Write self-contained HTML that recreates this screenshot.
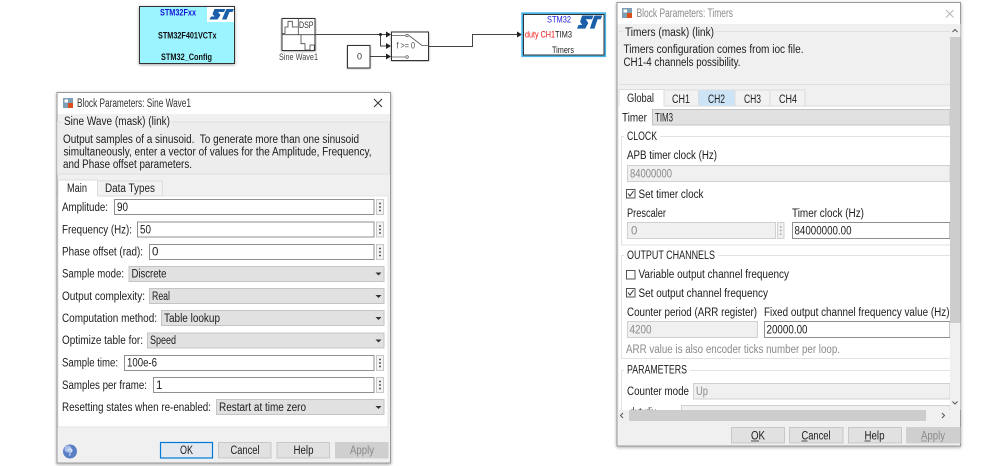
<!DOCTYPE html>
<html><head><meta charset="utf-8"><title>Block Parameters</title>
<style>
html,body{margin:0;padding:0;background:#fff;width:999px;height:466px;overflow:hidden}
svg{display:block;position:absolute;left:0;top:0;filter:blur(.35px)}
text{font-family:"Liberation Sans",sans-serif;font-size:11.5px;fill:#1c1c1c;white-space:pre}
.g{fill:#8a8a8a}.s{font-size:9px}.b{font-weight:bold}.t{fill:#555}
.f{fill:#fff;stroke:#8f8f8f}.d{fill:#f0f0f0;stroke:#d0d0d0}.c{fill:#e1e1e1;stroke:#c4c4c4}
.btn{fill:#e1e1e1;stroke:#c8c8c8}.dots{fill:#f3f3f3;stroke:#c8c8c8}
.w{fill:none;stroke:#444;stroke-width:1}
</style></head><body>
<svg width="999" height="466" viewBox="0 0 999 466" xmlns="http://www.w3.org/2000/svg">
<defs>
<filter id="sh" x="-5%" y="-5%" width="110%" height="110%"><feDropShadow dx="0" dy="1" stdDeviation="1.5" flood-color="#000" flood-opacity=".35"/></filter>
<clipPath id="cl"><rect x="619" y="400" width="331" height="10"/></clipPath>
<g id="st" fill="#1a5fa8"><path d="M5 0 H16 L14.5 3 H8.5 L11 6 L8 10.5 H0 L1.5 7.5 H5 L3 5 Z"/><path d="M17 0 H24.5 L23 3 H20 L17 10.5 H12.5 L15.5 3 Z"/></g>
<g id="dots"><circle cx="0" cy="-3.5" r=".9" fill="#333"/><circle cx="0" cy="0" r=".9" fill="#333"/><circle cx="0" cy="3.5" r=".9" fill="#333"/></g>
<path id="arr" d="M0 0 L-5 -3 V3 Z" fill="#222"/>
<path id="dd" d="M-3 0 H3 L0 3 Z" fill="#333"/>
</defs>

<!-- STM32 config block -->
<rect x="139.5" y="6.5" width="95" height="57" fill="#9bf4ff" stroke="#333" filter="url(#sh)"/>
<rect x="207" y="7" width="27" height="15" fill="#fff"/>
<use href="#st" x="209.5" y="9"/>
<text x="160" y="15.5" class="s b" style="fill:#1515d8" textLength="36" lengthAdjust="spacingAndGlyphs">STM32Fxx</text>
<text x="158" y="38.5" class="s b" style="fill:#111" textLength="58.5" lengthAdjust="spacingAndGlyphs">STM32F401VCTx</text>
<text x="161" y="60" class="s b" style="fill:#111" textLength="51" lengthAdjust="spacingAndGlyphs">STM32_Config</text>

<!-- Sine block -->
<rect x="282" y="18.5" width="33" height="32" fill="#fff" stroke="#333" filter="url(#sh)"/>
<path d="M282 34.7 H315 M298.3 18.5 V34.7 M298.3 34.7 H301 M282.5 33.5 H285 V27 H288 V21.3 H292.3 V27 H298.3" fill="none" stroke="#444" stroke-width=".8"/>
<path d="M301 34.7 V43.7 H305 V50 H310 V45 H314.3 V50" fill="none" stroke="#444" stroke-width=".8"/>
<text x="299" y="28" class="s" style="fill:#333" textLength="14.5" lengthAdjust="spacingAndGlyphs">DSP</text>
<text x="279" y="60" class="s" style="fill:#444" textLength="39" lengthAdjust="spacingAndGlyphs">Sine Wave1</text>

<!-- Signals -->
<path class="w" d="M315 34.5 H386 M380.5 34.5 V46 H386 M370 56.5 H386 M429 46.5 H472.5 V34.5 H517"/>
<circle cx="380.5" cy="34.5" r="1.5" fill="#222"/>
<use href="#arr" x="391" y="34.5"/><use href="#arr" x="391" y="46"/><use href="#arr" x="391" y="56.5"/><use href="#arr" x="522" y="34.5"/>

<!-- Switch -->
<rect x="391.5" y="32" width="37" height="28.5" fill="#fff" stroke="#333" filter="url(#sh)"/>
<path d="M392 35.5 H405 M392 57 H405 M409 35.5 L422 45.5 H428" fill="none" stroke="#555" stroke-width=".8"/>
<circle cx="407" cy="35.5" r="1.3" fill="#fff" stroke="#444" stroke-width=".7"/>
<circle cx="407" cy="57" r="1.3" fill="#fff" stroke="#444" stroke-width=".7"/>
<text x="396.5" y="48.5" style="fill:#444;font-size:9.5px" textLength="18.5" lengthAdjust="spacingAndGlyphs">f &gt;= 0</text>

<!-- Constant -->
<rect x="347.5" y="45.5" width="22.5" height="22.5" fill="#fff" stroke="#333" filter="url(#sh)"/>
<text x="357" y="59.5" style="fill:#333;font-size:9px">0</text>

<!-- Timers block -->
<rect x="522.2" y="13.2" width="83" height="43" fill="#fff" stroke="#48b4e8" stroke-width="1.8"/>
<rect x="523.5" y="14.5" width="80.5" height="40.5" fill="#fff" stroke="#333"/>
<use href="#st" transform="translate(577 15.5) scale(1.03 1.25)"/>
<text x="547" y="22.5" class="s" style="fill:#2222dd" textLength="24" lengthAdjust="spacingAndGlyphs">STM32</text>
<text x="525" y="37.5" class="s" style="fill:#ee1111" textLength="30" lengthAdjust="spacingAndGlyphs">duty CH1</text>
<text x="555" y="37.5" class="s" style="fill:#222" textLength="17" lengthAdjust="spacingAndGlyphs">TIM3</text>
<text x="552" y="53" class="s" style="fill:#222" textLength="22" lengthAdjust="spacingAndGlyphs">Timers</text>

<!-- ======= Sine Wave dialog ======= -->
<rect x="57" y="92.5" width="333.5" height="370.5" fill="#f0f0f0" stroke="#9a9a9a" filter="url(#sh)"/>
<rect x="57.5" y="93" width="332.5" height="21" fill="#fff"/>
<rect x="63" y="98" width="10" height="10" fill="#7d9fb5"/><rect x="68" y="103" width="5" height="5" fill="#d9501e"/><rect x="64.5" y="99.5" width="3.5" height="3" fill="#fff"/>
<text x="77" y="107" class="t" textLength="114" lengthAdjust="spacingAndGlyphs" style="fill:#333">Block Parameters: Sine Wave1</text>
<path d="M374 99 L382 107 M382 99 L374 107" stroke="#333" fill="none"/>
<rect x="57.5" y="122" width="332" height="52" fill="#ededed" stroke="#e0e0e0"/>
<rect x="62" y="116" width="110" height="10" fill="#f0f0f0"/>
<text x="64" y="125" textLength="106" lengthAdjust="spacingAndGlyphs">Sine Wave (mask) (link)</text>
<text x="63" y="143" textLength="296" lengthAdjust="spacingAndGlyphs">Output samples of a sinusoid.  To generate more than one sinusoid</text>
<text x="63.5" y="155.5" textLength="308" lengthAdjust="spacingAndGlyphs">simultaneously, enter a vector of values for the Amplitude, Frequency,</text>
<text x="63" y="168" textLength="129" lengthAdjust="spacingAndGlyphs">and Phase offset parameters.</text>

<rect x="58" y="196" width="330" height="231" fill="#fff" stroke="#e4e4e4"/>
<rect x="97.5" y="181" width="65" height="15" fill="#f2f2f2" stroke="#dcdcdc"/>
<rect x="58" y="180" width="39.5" height="17" fill="#fff"/>
<path d="M58 196 V180 H97.5 V196" fill="none" stroke="#dcdcdc"/>
<text x="67" y="192" textLength="20" lengthAdjust="spacingAndGlyphs">Main</text>
<text x="105" y="192" textLength="50" lengthAdjust="spacingAndGlyphs">Data Types</text>

<text x="62" y="211" textLength="46" lengthAdjust="spacingAndGlyphs">Amplitude:</text>
<rect class="f" x="114.5" y="199.5" width="259.5" height="15"/><text x="117" y="211" textLength="11" lengthAdjust="spacingAndGlyphs">90</text>
<rect class="dots" x="376.5" y="199.5" width="7" height="15"/><use href="#dots" x="380" y="207"/>

<text x="62" y="233.5" textLength="70" lengthAdjust="spacingAndGlyphs">Frequency (Hz):</text>
<rect class="f" x="137.5" y="222" width="236.5" height="15"/><text x="140" y="233.5" textLength="11" lengthAdjust="spacingAndGlyphs">50</text>
<rect class="dots" x="376.5" y="222" width="7" height="15"/><use href="#dots" x="380" y="229.5"/>

<text x="62" y="255.5" textLength="81" lengthAdjust="spacingAndGlyphs">Phase offset (rad):</text>
<rect class="f" x="149.5" y="244.5" width="224.5" height="15"/><text x="152" y="255.5">0</text>
<rect class="dots" x="376.5" y="244.5" width="7" height="15"/><use href="#dots" x="380" y="252"/>

<text x="62" y="277.5" textLength="62" lengthAdjust="spacingAndGlyphs">Sample mode:</text>
<rect class="c" x="129" y="266.5" width="255" height="15"/><text x="131.5" y="277.5" textLength="35" lengthAdjust="spacingAndGlyphs">Discrete</text><use href="#dd" x="378.5" y="272.5"/>

<text x="62" y="300" textLength="83" lengthAdjust="spacingAndGlyphs">Output complexity:</text>
<rect class="c" x="149.5" y="288.5" width="234.5" height="15"/><text x="152" y="300" textLength="18" lengthAdjust="spacingAndGlyphs">Real</text><use href="#dd" x="378.5" y="295"/>

<text x="62" y="322" textLength="95" lengthAdjust="spacingAndGlyphs">Computation method:</text>
<rect class="c" x="161.5" y="310.5" width="222.5" height="15"/><text x="164" y="322" textLength="56" lengthAdjust="spacingAndGlyphs">Table lookup</text><use href="#dd" x="378.5" y="317"/>

<text x="62" y="344" textLength="81" lengthAdjust="spacingAndGlyphs">Optimize table for:</text>
<rect class="c" x="147.5" y="333" width="236.5" height="15"/><text x="150" y="344" textLength="26" lengthAdjust="spacingAndGlyphs">Speed</text><use href="#dd" x="378.5" y="339.5"/>

<text x="62" y="366.5" textLength="56" lengthAdjust="spacingAndGlyphs">Sample time:</text>
<rect class="f" x="124.5" y="355.5" width="249.5" height="15"/><text x="127" y="366.5" textLength="30" lengthAdjust="spacingAndGlyphs">100e-6</text>
<rect class="dots" x="376.5" y="355.5" width="7" height="15"/><use href="#dots" x="380" y="363"/>

<text x="62" y="389" textLength="85" lengthAdjust="spacingAndGlyphs">Samples per frame:</text>
<rect class="f" x="153.5" y="377.5" width="220.5" height="15"/><text x="156" y="389">1</text>
<rect class="dots" x="376.5" y="377.5" width="7" height="15"/><use href="#dots" x="380" y="385"/>

<text x="62" y="411" textLength="149" lengthAdjust="spacingAndGlyphs">Resetting states when re-enabled:</text>
<rect class="c" x="216.5" y="399.5" width="167.5" height="15"/><text x="219" y="411" textLength="87" lengthAdjust="spacingAndGlyphs">Restart at time zero</text><use href="#dd" x="378.5" y="406"/>

<circle cx="70" cy="451.5" r="7" fill="#5b7fc4"/><circle cx="68" cy="449" r="3.5" fill="#a9c0ea"/>
<text x="67" y="455.5" class="b" style="fill:#dfe8fa;font-size:10px">?</text>

<rect x="160.5" y="442.5" width="52" height="15.5" fill="#e3e9ef" stroke="#0078d7" stroke-width="1.2"/><text x="180" y="454" textLength="13" lengthAdjust="spacingAndGlyphs">OK</text>
<rect class="btn" x="218.5" y="442.5" width="52.5" height="15.5"/><text x="230.5" y="454" textLength="29" lengthAdjust="spacingAndGlyphs">Cancel</text>
<rect class="btn" x="277" y="442.5" width="52.5" height="15.5"/><text x="293.5" y="454" textLength="20" lengthAdjust="spacingAndGlyphs">Help</text>
<rect x="335.5" y="442.5" width="52.5" height="15.5" fill="#cfcfcf" stroke="#cfcfcf"/><text x="350" y="454" class="g" textLength="24" lengthAdjust="spacingAndGlyphs">Apply</text>

<!-- ======= Timers dialog ======= -->
<rect x="617" y="2.5" width="343.5" height="443.5" fill="#f0f0f0" stroke="#9a9a9a" filter="url(#sh)"/>
<rect x="617.5" y="3" width="342.5" height="21" fill="#fff"/>
<rect x="622" y="8" width="10" height="10" fill="#7d9fb5"/><rect x="627" y="13" width="5" height="5" fill="#d9501e"/><rect x="623.5" y="9.5" width="3.5" height="3" fill="#fff"/>
<text x="636.5" y="17" class="g" textLength="96.5" lengthAdjust="spacingAndGlyphs">Block Parameters: Timers</text>
<path d="M946 10 L953.5 17.5 M953.5 10 L946 17.5" stroke="#b5b5b5" fill="none"/>

<path d="M619 31.5 H950 M619 84.5 H950" stroke="#e0e0e0" fill="none"/>
<rect x="623" y="28" width="93" height="9" fill="#f0f0f0"/>
<text x="625" y="36" textLength="89" lengthAdjust="spacingAndGlyphs">Timers (mask) (link)</text>
<text x="623.5" y="53" textLength="180" lengthAdjust="spacingAndGlyphs">Timers configuration comes from ioc file.</text>
<text x="623.5" y="66" textLength="117" lengthAdjust="spacingAndGlyphs">CH1-4 channels possibility.</text>

<rect x="619" y="106" width="331" height="304" fill="#fff"/>
<rect x="664" y="90" width="141" height="16" fill="#f2f2f2" stroke="#dcdcdc"/>
<rect x="698.5" y="90.5" width="36.5" height="15.5" fill="#cde4f7"/>
<path d="M698.5 90 V106 M735 90 V106 M770 90 V106" stroke="#dcdcdc" fill="none"/>
<rect x="619" y="89" width="45" height="18" fill="#fff"/>
<path d="M619 106 V89.5 H664 V106" fill="none" stroke="#dcdcdc"/>
<path d="M664 106 H950" stroke="#dcdcdc"/>
<text x="627" y="102" textLength="27" lengthAdjust="spacingAndGlyphs">Global</text>
<text x="672" y="103" textLength="18" lengthAdjust="spacingAndGlyphs">CH1</text>
<text x="708" y="103" textLength="17" lengthAdjust="spacingAndGlyphs">CH2</text>
<text x="744" y="103" textLength="17" lengthAdjust="spacingAndGlyphs">CH3</text>
<text x="779" y="103" textLength="18" lengthAdjust="spacingAndGlyphs">CH4</text>

<text x="622" y="121.5" textLength="25" lengthAdjust="spacingAndGlyphs">Timer</text>
<rect x="652.5" y="109.5" width="297.5" height="15.5" fill="#e1e1e1" stroke="#c4c4c4"/>
<text x="655" y="121.5" textLength="18" lengthAdjust="spacingAndGlyphs">TIM3</text>

<!-- group borders -->
<path d="M950 136.5 H621.5 V245 M621.5 245 H950 M950 255.5 H621.5 V358.5 H950 M950 370.5 H621.5 V410" fill="none" stroke="#e2e2e2"/>
<rect x="624" y="132" width="36" height="9" fill="#fff"/>
<text x="627" y="140" textLength="30" lengthAdjust="spacingAndGlyphs">CLOCK</text>
<text x="627" y="159" textLength="90" lengthAdjust="spacingAndGlyphs">APB timer clock (Hz)</text>
<rect class="d" x="627.5" y="165.5" width="322.5" height="16"/>
<text x="630" y="177.5" class="g" textLength="42" lengthAdjust="spacingAndGlyphs">84000000</text>
<rect x="626.5" y="189.5" width="8.5" height="8.5" fill="#fff" stroke="#555"/><path d="M628 193.5 L630 196 L633.5 191" fill="none" stroke="#333"/>
<text x="638.5" y="198" textLength="65" lengthAdjust="spacingAndGlyphs">Set timer clock</text>
<text x="627" y="217" textLength="39" lengthAdjust="spacingAndGlyphs">Prescaler</text>
<text x="792" y="217" textLength="72" lengthAdjust="spacingAndGlyphs">Timer clock (Hz)</text>
<rect class="d" x="627.5" y="222.5" width="148" height="16"/><text x="631" y="234.5" class="g">0</text>
<rect class="d" x="777.5" y="222.5" width="6.5" height="16"/><use href="#dots" x="780.7" y="230.5" opacity=".4"/>
<rect class="f" x="792.5" y="222.5" width="157.5" height="16"/><text x="794.5" y="234.5" textLength="57" lengthAdjust="spacingAndGlyphs">84000000.00</text>

<rect x="624" y="251" width="94" height="9" fill="#fff"/>
<text x="627" y="259" textLength="88" lengthAdjust="spacingAndGlyphs">OUTPUT CHANNELS</text>
<rect x="626.5" y="270.5" width="8.5" height="8.5" fill="#fff" stroke="#555"/>
<text x="638.5" y="278" textLength="150.5" lengthAdjust="spacingAndGlyphs">Variable output channel frequency</text>
<rect x="626.5" y="288.5" width="8.5" height="8.5" fill="#fff" stroke="#555"/><path d="M628 292.5 L630 295 L633.5 290" fill="none" stroke="#333"/>
<text x="638.5" y="297" textLength="129.5" lengthAdjust="spacingAndGlyphs">Set output channel frequency</text>
<text x="627" y="316" textLength="130" lengthAdjust="spacingAndGlyphs">Counter period (ARR register)</text>
<text x="764" y="316" textLength="185.5" lengthAdjust="spacingAndGlyphs">Fixed output channel frequency value (Hz)</text>
<rect class="d" x="627.5" y="321.5" width="130" height="16"/><text x="629.5" y="333.5" class="g" textLength="22" lengthAdjust="spacingAndGlyphs">4200</text>
<rect class="f" x="764.5" y="321.5" width="185.5" height="16"/><text x="766.5" y="333.5" textLength="41" lengthAdjust="spacingAndGlyphs">20000.00</text>
<text x="626" y="353" class="g" textLength="214" lengthAdjust="spacingAndGlyphs">ARR value is also encoder ticks number per loop.</text>

<rect x="624" y="366" width="66" height="9" fill="#fff"/>
<text x="627" y="373.5" textLength="60" lengthAdjust="spacingAndGlyphs">PARAMETERS</text>
<text x="627" y="395" textLength="62" lengthAdjust="spacingAndGlyphs">Counter mode</text>
<rect class="d" x="693.5" y="383.5" width="256.5" height="15.5"/><text x="696" y="395" class="g" textLength="12" lengthAdjust="spacingAndGlyphs">Up</text>
<rect class="d" x="681.5" y="405.5" width="268.5" height="10" clip-path="url(#cl)"/>
<text x="630" y="416" clip-path="url(#cl)" textLength="26" lengthAdjust="spacingAndGlyphs">dutydiv</text>

<!-- scrollbars -->
<rect x="950" y="24" width="10.5" height="386" fill="#f0f0f0"/>
<rect x="950" y="37" width="10.5" height="286" fill="#cdcdcd"/>
<path d="M952.5 32 L955 29.5 L957.5 32 M952.5 401.5 L955 404 L957.5 401.5" fill="none" stroke="#555"/>
<rect x="619" y="410" width="341" height="11" fill="#f0f0f0"/>
<rect x="629" y="410" width="297" height="11" fill="#cdcdcd"/>
<path d="M623 413 L620.5 415.5 L623 418 M942 413 L944.5 415.5 L942 418" fill="none" stroke="#555"/>

<!-- buttons -->
<rect class="btn" x="731.5" y="427.5" width="53" height="15.5"/><text x="751" y="439.5" textLength="14" lengthAdjust="spacingAndGlyphs">OK</text><path d="M751 441 H759" stroke="#222" stroke-width=".8"/>
<rect class="btn" x="789.5" y="427.5" width="53.5" height="15.5"/><text x="801.5" y="439.5" textLength="29" lengthAdjust="spacingAndGlyphs">Cancel</text><path d="M801.5 441 H807.5" stroke="#222" stroke-width=".8"/>
<rect class="btn" x="848.5" y="427.5" width="53" height="15.5"/><text x="864.5" y="439.5" textLength="20" lengthAdjust="spacingAndGlyphs">Help</text><path d="M864.5 441 H870.5" stroke="#222" stroke-width=".8"/>
<rect x="906.5" y="427.5" width="53.5" height="15.5" fill="#cfcfcf" stroke="#cfcfcf"/><text x="921" y="439.5" class="g" textLength="24" lengthAdjust="spacingAndGlyphs">Apply</text><path d="M921 441 H927" stroke="#8a8a8a" stroke-width=".8"/>
</svg>
</body></html>
